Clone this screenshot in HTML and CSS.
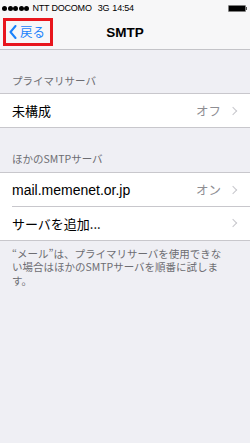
FILE: index.html
```html
<!DOCTYPE html>
<html lang="ja">
<head>
<meta charset="utf-8">
<link rel="stylesheet" href="styles.css">
</head>
<body>
<header class="bar">
  <div class="status">
    <div class="carrier"><span class="dots"><i></i><i></i><i></i><i></i><i></i></span><span>NTT DOCOMO</span><span class="net">3G</span><span>14:54</span></div>
    <div class="battery"><span class="cell"></span><span class="nub"></span></div>
  </div>
  <nav class="nav">
    <div class="back">
      <svg class="chev" width="8" height="14" viewBox="0 0 8 14"><polyline points="6.5,1 1.5,7 6.5,13" fill="none" stroke="#1a82fb" stroke-width="2" stroke-linecap="round" stroke-linejoin="round"/></svg>
      <span class="back-label">戻る</span>
    </div>
    <div class="title">SMTP</div>
    <div></div>
  </nav>
</header>
<main>
  <div class="sec-head first">プライマリサーバ</div>
  <div class="group">
    <div class="row"><span class="label">未構成</span><span class="value">オフ</span><span class="disclosure"></span></div>
  </div>
  <div class="sec-head second">ほかのSMTPサーバ</div>
  <div class="group">
    <div class="row"><span class="label latin">mail.memenet.or.jp</span><span class="value">オン</span><span class="disclosure"></span></div>
    <div class="row sep"><span class="label">サーバを追加...</span><span class="disclosure"></span></div>
  </div>
  <p class="footer">“メール”は、プライマリサーバを使用できな<br>い場合はほかのSMTPサーバを順番に試しま<br>す。</p>
</main>
</body>
</html>
```
FILE: styles.css
```css
html, body {
  margin: 0;
  padding: 0;
}
body {
  width: 250px;
  height: 443px;
  background: #efeff4;
  font-family: "Liberation Sans", "Noto Sans CJK JP", sans-serif;
  color: #000;
  overflow: hidden;
}
.bar {
  background: #f7f7f8;
  border-bottom: 1px solid #c4c4c8;
  height: 49px;
}
.status {
  height: 16px;
  display: flex;
  align-items: center;
  justify-content: space-between;
  padding: 0 3px 0 2px;
}
.carrier {
  display: flex;
  align-items: center;
  gap: 3px;
  font-size: 9px;
  letter-spacing: -0.2px;
}
.carrier .net {
  margin-left: 3px;
}
.dots {
  display: flex;
  gap: 0.6px;
}
.dots i {
  width: 5px;
  height: 5px;
  border-radius: 50%;
  background: #000;
}
.battery {
  display: flex;
  align-items: center;
}
.cell {
  width: 16px;
  height: 5px;
  background: #000;
  border: 1px solid #7d7d7d;
  border-radius: 1px;
}
.nub {
  width: 1.5px;
  height: 3px;
  background: #555;
}
.nav {
  height: 33px;
  display: grid;
  grid-template-columns: 1fr auto 1fr;
  align-items: start;
}
.back {
  justify-self: start;
  margin: 2px 0 0 3px;
  width: 41px;
  height: 22px;
  border: 3px solid #e8161d;
  display: flex;
  align-items: center;
  gap: 3px;
  padding-left: 3px;
}
.chev {
  display: block;
}
.back-label {
  color: #1a82fb;
  font-size: 12.5px;
  font-family: "Noto Sans CJK JP", sans-serif;
  line-height: 1;
  margin-top: 1px;
}
.title {
  font-weight: bold;
  font-size: 13.5px;
  line-height: 1;
  margin-top: 10px;
}
.sec-head {
  color: #6d6d72;
  font-size: 10.5px;
  font-family: "Noto Sans CJK JP", sans-serif;
  line-height: 13px;
  padding-left: 12px;
  display: flex;
  align-items: flex-end;
}
.sec-head.first {
  height: 37px;
  padding-bottom: 6px;
}
.sec-head.second {
  height: 37px;
  padding-bottom: 7px;
}
.group {
  background: #fff;
  border-top: 1px solid #c8c7cc;
  border-bottom: 1px solid #c8c7cc;
}
.row {
  height: 33px;
  display: flex;
  align-items: center;
  padding: 0 12px 0 12px;
}
.row.sep {
  border-top: 1px solid #c8c7cc;
  margin-left: 12px;
  padding-left: 0;
  height: 32.5px;
}
.label {
  flex: 1;
  font-size: 13px;
  font-family: "Noto Sans CJK JP", sans-serif;
}
.label.latin {
  font-family: "Liberation Sans", sans-serif;
  font-size: 14px;
}
.value {
  color: #8e8e93;
  font-size: 12.5px;
  font-family: "Noto Sans CJK JP", sans-serif;
  margin-right: 9px;
}
.disclosure {
  width: 5px;
  height: 5px;
  border-top: 1.5px solid #c7c7cc;
  border-right: 1.5px solid #c7c7cc;
  transform: rotate(45deg);
  margin-right: 2px;
}
.footer {
  margin: 6px 0 0 0;
  padding: 0 10px 0 12px;
  color: #6d6d72;
  font-size: 10.5px;
  line-height: 13.5px;
  font-family: "Noto Sans CJK JP", sans-serif;
}
```
